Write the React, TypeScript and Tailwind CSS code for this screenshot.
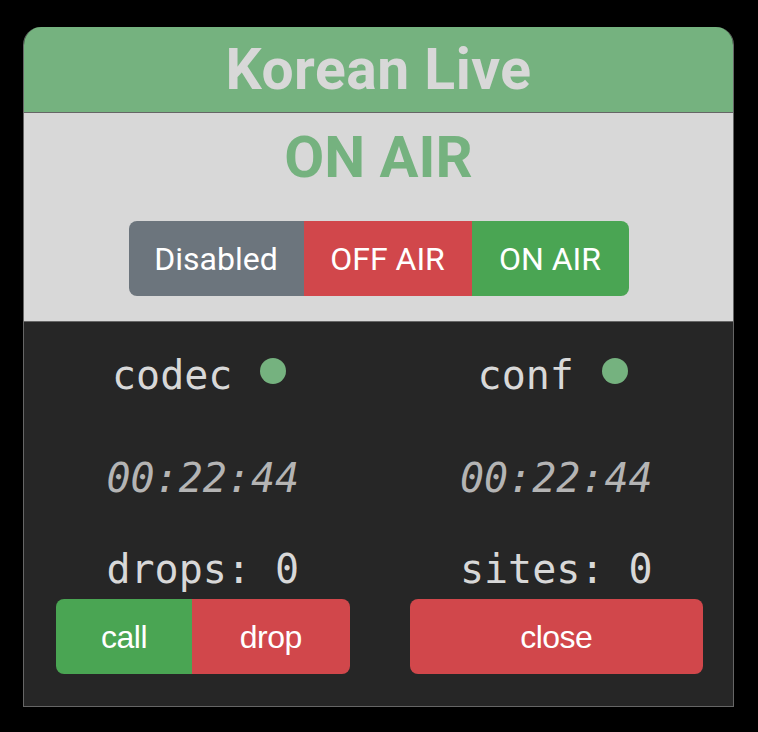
export default function App() {
  const mono = "font-['DejaVu_Sans_Mono','Liberation_Mono',monospace]";
  return (
    <div className="min-h-[732px] w-[758px] bg-black pt-[27px] pl-[23px]">
      <div className="w-[711px] rounded-t-[18px] border border-[#666] border-t-0 overflow-hidden font-['Roboto',sans-serif]">
        <div className="h-[86px] bg-[#75b27f] flex items-center justify-center border-b border-[#666]">
          <h1 className="text-[57px] font-bold text-[#d8d8d8] leading-none tracking-[0.5px]">Korean Live</h1>
        </div>
        <div className="bg-[#d8d8d8] h-[209px] flex flex-col items-center border-b border-[#666]">
          <div className="mt-[16px] h-[56px] flex items-center text-[58px] font-bold text-[#75b27f] leading-none">ON AIR</div>
          <div className="mt-[36px] flex h-[75px] rounded-[8px] overflow-hidden text-white text-[32px]">
            <button className="w-[175px] bg-[#6c757d]">Disabled</button>
            <button className="w-[168px] bg-[#d1474b]">OFF AIR</button>
            <button className="w-[157px] bg-[#4aa553]">ON AIR</button>
          </div>
        </div>
        <div className="bg-[#262626] grid grid-cols-2 pt-[30px] pb-[32px]">
          {[
            { label: "codec", stat: "drops: 0" },
            { label: "conf", stat: "sites: 0" },
          ].map((col, i) => (
            <div key={col.label} className={i === 0 ? "pl-[32px] pr-[29px] flex flex-col items-center" : "pl-[31px] pr-[30px] flex flex-col items-center"}>
              <div className={`mr-[7px] flex items-center h-[46px] text-[40px] text-[#d8d8d8] ${mono}`}>
                <span>{col.label}</span>
                <span className="ml-[28px] w-[26px] h-[26px] rounded-full bg-[#75b27f] -mt-[8px]" />
              </div>
              <div className={`mt-[57px] h-[46px] flex items-center text-[40px] italic text-[#b4b4b4] ${mono}`}>00:22:44</div>
              <div className={`mt-[45px] h-[46px] flex items-center text-[40px] text-[#d8d8d8] ${mono}`}>{col.stat}</div>
              <div className="mt-[7px] w-full flex h-[75px] rounded-[8px] overflow-hidden text-white text-[32px] font-['Liberation_Sans',sans-serif] tracking-[-0.5px]">
                {i === 0 ? (
                  <>
                    <button className="w-[136px] bg-[#4aa553]">call</button>
                    <button className="flex-1 bg-[#d1474b]">drop</button>
                  </>
                ) : (
                  <button className="flex-1 bg-[#d1474b]">close</button>
                )}
              </div>
            </div>
          ))}
        </div>
      </div>
    </div>
  );
}
